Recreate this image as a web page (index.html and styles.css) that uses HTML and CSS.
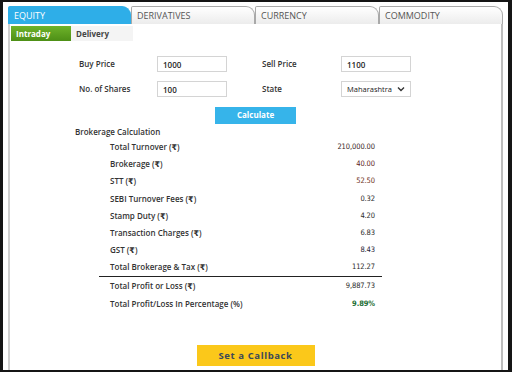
FILE: index.html
```html
<!DOCTYPE html>
<html>
<head>
<meta charset="utf-8">
<link rel="stylesheet" href="styles.css">
</head>
<body>
<div class="frame">
  <div class="panel">
    <div class="tabs">
      <div class="tab active">EQUITY</div>
      <div class="tab">DERIVATIVES</div>
      <div class="tab">CURRENCY</div>
      <div class="tab">COMMODITY</div>
    </div>
    <div class="content">
      <div class="subtabs">
        <div class="subtab on">Intraday</div>
        <div class="subtab">Delivery</div>
      </div>
      <div class="form">
        <div class="lbl">Buy Price</div>
        <div class="inp">1000</div>
        <div></div>
        <div class="lbl">Sell Price</div>
        <div class="inp">1100</div>
        <div class="lbl">No. of Shares</div>
        <div class="inp">100</div>
        <div></div>
        <div class="lbl">State</div>
        <div class="inp sel"><span>Maharashtra</span><svg width="8" height="6" viewBox="0 0 8 6"><path d="M1 1.5 L4 4.5 L7 1.5" fill="none" stroke="#333" stroke-width="1.4"/></svg></div>
      </div>
      <div class="calc-wrap"><div class="calc">Calculate</div></div>
      <div class="heading">Brokerage Calculation</div>
      <div class="results">
        <div class="row"><span>Total Turnover (₹)</span><span class="v c1">210,000.00</span></div>
        <div class="row"><span>Brokerage (₹)</span><span class="v c2">40.00</span></div>
        <div class="row"><span>STT (₹)</span><span class="v c3">52.50</span></div>
        <div class="row"><span>SEBI Turnover Fees (₹)</span><span class="v c4">0.32</span></div>
        <div class="row"><span>Stamp Duty (₹)</span><span class="v c4">4.20</span></div>
        <div class="row"><span>Transaction Charges (₹)</span><span class="v c4">6.83</span></div>
        <div class="row"><span>GST (₹)</span><span class="v c5">8.43</span></div>
        <div class="row total"><span>Total Brokerage &amp; Tax (₹)</span><span class="v c4">112.27</span></div>
        <div class="row"><span>Total Profit or Loss (₹)</span><span class="v c4">9,887.73</span></div>
        <div class="row"><span>Total Profit/Loss In Percentage (%)</span><span class="v c6">9.89%</span></div>
      </div>
      <div class="cb-wrap"><div class="callback">Set a Callback</div></div>
    </div>
  </div>
</div>
</body>
</html>
```
FILE: styles.css
```css
* { box-sizing: border-box; }
html, body { margin: 0; padding: 0; }
body {
  width: 512px;
  height: 372px;
  background: #111;
  font-family: "Open Sans", "DejaVu Sans", sans-serif;
  overflow: hidden;
}
.frame {
  width: 512px;
  height: 372px;
  border-left: 3px solid #151515;
  border-top: 2px solid #151515;
  border-right: 4px solid #151515;
  border-bottom: 2px solid #151515;
  background: #fff;
  padding: 4px 0 0 5px;
}
.panel {
  width: 495px;
  height: 364px;
  display: flex;
  flex-direction: column;
}
.tabs {
  display: flex;
  height: 18px;
}
.tab {
  width: 124px;
  height: 18px;
  border: 1px solid #a9a9a9;
  border-bottom: none;
  border-radius: 2px 9px 0 0;
  background: linear-gradient(#ffffff, #ececec);
  color: #555;
  font-size: 9px;
  line-height: 17px;
  padding-left: 5px;
}
.tab.active {
  width: 123px;
  background: #2eaee8;
  border-color: #2eaee8;
  color: #fff;
}
.content {
  flex: 1;
  border-left: 2px solid #d0d0d0;
  border-right: 2px solid #bdbdbd;
}
.subtabs {
  display: flex;
  margin: 2px 0 0 1px;
  height: 15px;
}
.subtab {
  width: 62px;
  font-size: 8px;
  font-weight: 700;
  color: #444;
  background: #f4f4f4;
  line-height: 15px;
  padding-left: 5px;
}
.subtab.on {
  width: 60px;
  background: linear-gradient(#6fb32a, #4d8f16);
  color: #fff;
}
.form {
  display: grid;
  grid-template-columns: 78px 70px 35px 79px 70px;
  grid-auto-rows: 16px;
  row-gap: 9px;
  margin: 15px 0 0 69px;
  align-items: center;
}
.lbl {
  font-size: 8px;
  font-weight: 600;
  color: #333;
  margin-top: -2px;
}
.inp {
  height: 16px;
  border: 1px solid #d4d4d4;
  font-size: 8px;
  font-weight: 600;
  color: #222;
  padding-left: 5px;
  line-height: 15px;
}
.sel {
  display: flex;
  justify-content: space-between;
  align-items: center;
  padding-right: 5px;
  line-height: normal;
  font-weight: 400;
  font-size: 7.5px;
}
.calc-wrap {
  display: flex;
  justify-content: center;
  margin-top: 10px;
}
.calc {
  width: 81px;
  height: 17px;
  background: #36b4ea;
  color: #fff;
  font-size: 8px;
  font-weight: 700;
  text-align: center;
  line-height: 16px;
}
.heading {
  margin: 2px 0 0 65px;
  font-size: 8px;
  font-weight: 600;
  color: #333;
  height: 11px;
  line-height: 11px;
}
.results {
  margin: 1px 0 0 89px;
  width: 283px;
}
.row {
  display: flex;
  justify-content: space-between;
  height: 17.2px;
  line-height: 17.2px;
  padding: 0 7px 0 11px;
  font-size: 8px;
  font-weight: 600;
  color: #333;
}
.row.total {
  border-bottom: 1.5px solid #222;
  height: 19px;
  line-height: 17px;
}
.v {
  font-family: "DejaVu Sans Condensed", "DejaVu Sans", sans-serif;
  font-stretch: condensed;
  font-weight: 400;
  font-size: 7.5px;
  letter-spacing: -0.1px;
}
.c1 { color: #3a1e1e; }
.c2 { color: #5e1a1a; }
.c3 { color: #6e3222; }
.c4 { color: #2a2a2a; }
.c5 { color: #1e1e38; }
.c6 { color: #1b6e34; font-weight: 700; }
.cb-wrap {
  display: flex;
  justify-content: center;
  margin-top: 33px;
}
.callback {
  width: 118px;
  height: 21px;
  background: #fbc81a;
  color: #3c4858;
  font-size: 9.5px;
  font-weight: 700;
  letter-spacing: 0.6px;
  text-align: center;
  line-height: 21px;
}
```
